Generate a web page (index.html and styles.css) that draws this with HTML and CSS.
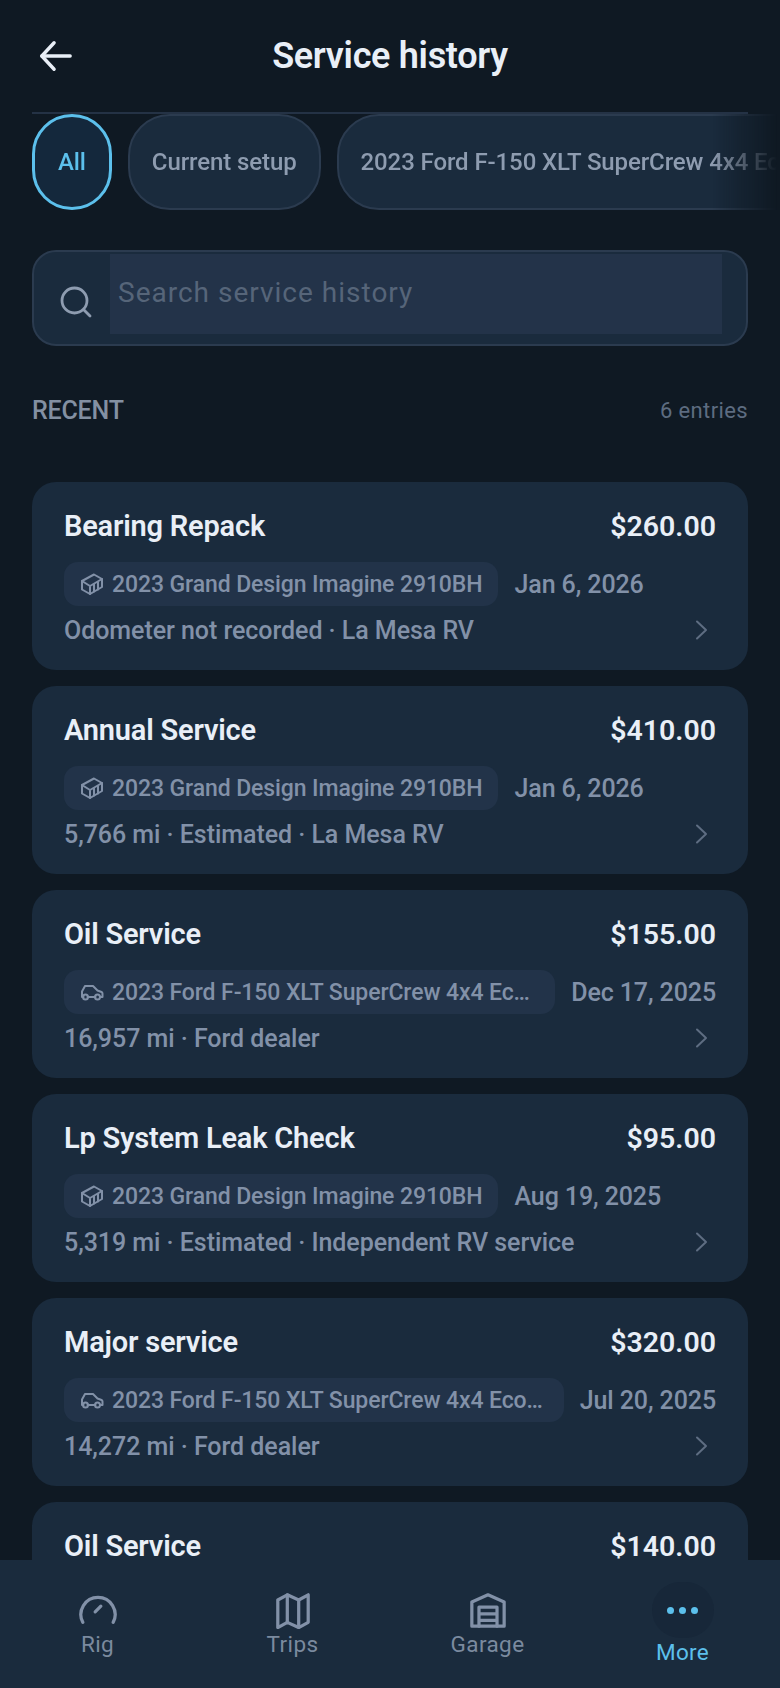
FILE: index.html
```html
<!DOCTYPE html>
<html lang="en">
<head>
<meta charset="utf-8">
<title>Service history</title>
<link rel="stylesheet" href="styles.css">
</head>
<body>
<div class="app">
  <header class="topbar">
    <svg class="back" viewBox="0 0 36 36" fill="none" stroke="currentColor" stroke-width="3.6" stroke-linecap="round" stroke-linejoin="round"><path d="M33 18H3"/><path d="M16 4 3 18l13 14"/></svg>
    <h1 class="title">Service history</h1>
  </header>
  <div class="chips">
    <div class="chip chip-on">All</div>
    <div class="chip">Current setup</div>
    <div class="chip">2023 Ford F-150 XLT SuperCrew 4x4 EcoBoost</div>
  </div>
  <div class="search">
    <svg class="search-icon" viewBox="0 0 32 32" fill="none" stroke="currentColor" stroke-width="2.8" stroke-linecap="round"><circle cx="14.5" cy="14.5" r="12.5"/><path d="m24 24 6 6"/></svg>
    <div class="search-field">Search service history</div>
  </div>
  <div class="section">
    <span class="section-label">RECENT</span>
    <span class="section-count">6 entries</span>
  </div>
  <main class="list">
    <article class="card">
      <div class="row"><span class="name">Bearing Repack</span><span class="cost">$260.00</span></div>
      <div class="row-meta"><span class="pill"><svg class="pill-icon"><use href="#trailer"/></svg><span class="pill-text">2023 Grand Design Imagine 2910BH</span></span><span class="date">Jan 6, 2026</span></div>
      <div class="row"><span class="detail">Odometer not recorded · La Mesa RV</span><svg class="chev"><use href="#chev"/></svg></div>
    </article>
    <article class="card">
      <div class="row"><span class="name">Annual Service</span><span class="cost">$410.00</span></div>
      <div class="row-meta"><span class="pill"><svg class="pill-icon"><use href="#trailer"/></svg><span class="pill-text">2023 Grand Design Imagine 2910BH</span></span><span class="date">Jan 6, 2026</span></div>
      <div class="row"><span class="detail">5,766 mi · Estimated · La Mesa RV</span><svg class="chev"><use href="#chev"/></svg></div>
    </article>
    <article class="card">
      <div class="row"><span class="name">Oil Service</span><span class="cost">$155.00</span></div>
      <div class="row-meta"><span class="pill pill-grow"><svg class="pill-icon"><use href="#car"/></svg><span class="pill-text">2023 Ford F-150 XLT SuperCrew 4x4 EcoBoost</span></span><span class="date">Dec 17, 2025</span></div>
      <div class="row"><span class="detail">16,957 mi · Ford dealer</span><svg class="chev"><use href="#chev"/></svg></div>
    </article>
    <article class="card">
      <div class="row"><span class="name">Lp System Leak Check</span><span class="cost">$95.00</span></div>
      <div class="row-meta"><span class="pill"><svg class="pill-icon"><use href="#trailer"/></svg><span class="pill-text">2023 Grand Design Imagine 2910BH</span></span><span class="date">Aug 19, 2025</span></div>
      <div class="row"><span class="detail">5,319 mi · Estimated · Independent RV service</span><svg class="chev"><use href="#chev"/></svg></div>
    </article>
    <article class="card">
      <div class="row"><span class="name">Major service</span><span class="cost">$320.00</span></div>
      <div class="row-meta"><span class="pill pill-grow"><svg class="pill-icon"><use href="#car"/></svg><span class="pill-text">2023 Ford F-150 XLT SuperCrew 4x4 EcoBoost</span></span><span class="date">Jul 20, 2025</span></div>
      <div class="row"><span class="detail">14,272 mi · Ford dealer</span><svg class="chev"><use href="#chev"/></svg></div>
    </article>
    <article class="card">
      <div class="row"><span class="name">Oil Service</span><span class="cost">$140.00</span></div>
    </article>
  </main>
  <nav class="tabs">
    <div class="tab">
      <svg class="tab-icon" viewBox="0 0 40 40" fill="none" stroke="currentColor" stroke-width="3.4" stroke-linecap="round" stroke-linejoin="round"><path d="M4 33a18 18 0 1 1 32 0"/><path d="m17 22 6-6"/></svg>
      <span class="tab-label">Rig</span>
    </div>
    <div class="tab">
      <svg class="tab-icon" viewBox="0 0 40 40" fill="none" stroke="currentColor" stroke-width="3.4" stroke-linecap="round" stroke-linejoin="round"><path d="M4 9.500 14 4l12 5.500L36 4v29l-10 5.500-12-5.500L4 38.500z"/><path d="M14 4v29.500M26 9.500V38"/></svg>
      <span class="tab-label">Trips</span>
    </div>
    <div class="tab">
      <svg class="tab-icon" viewBox="0 0 40 40" fill="none" stroke="currentColor" stroke-width="3.4" stroke-linecap="round" stroke-linejoin="round"><path d="M3 11.500 20 4l17 7.500V37H3z"/><path d="M10.500 37V17h19v20M10.500 24h19M10.500 31h19"/></svg>
      <span class="tab-label">Garage</span>
    </div>
    <div class="tab tab-on">
      <span class="more-bubble"><i class="dot"></i><i class="dot"></i><i class="dot"></i></span>
      <span class="tab-label">More</span>
    </div>
  </nav>
</div>
<svg class="defs" aria-hidden="true">
  <symbol id="trailer" viewBox="0 0 24 24" fill="none" stroke="currentColor" stroke-width="2" stroke-linecap="round" stroke-linejoin="round"><path d="M2 9 14 2.500l8 4.500v8L10 22l-8-4.500z"/><path d="M2 9l8 5 12-7M10 14v8M14 12v7.500M18 10v7.500"/></symbol>
  <symbol id="car" viewBox="0 0 24 24" fill="none" stroke="currentColor" stroke-width="2" stroke-linecap="round" stroke-linejoin="round"><path d="M3.500 17H2V11.500L5 6h8l4.500 4.500 4 1.500q1 .5 1 1.500V17h-2M7.500 17h8"/><circle cx="5.500" cy="17" r="2.500"/><circle cx="17.500" cy="17" r="2.500"/></symbol>
  <symbol id="chev" viewBox="0 0 24 24" fill="none" stroke="currentColor" stroke-width="2" stroke-linecap="round" stroke-linejoin="round"><path d="m8 3.500 9 8.500-9 8.500"/></symbol>
</svg>
</body>
</html>
```

FILE: styles.css
```css
* { box-sizing: border-box; }
html, body { margin: 0; padding: 0; }
body { background: #0f1923; font-family: Roboto, "Liberation Sans", sans-serif; color: #e9eff7; }
.app { position: relative; width: 780px; height: 1688px; overflow: hidden; padding: 0 32px; }
.defs { position: absolute; width: 0; height: 0; }

.topbar { height: 114px; position: relative; display: flex; align-items: center; justify-content: center; border-bottom: 2px solid #243245; }
.back { position: absolute; left: 7px; top: 39px; width: 34px; height: 34px; color: #e9eff7; }
.title { margin: 0; font-size: 36px; font-weight: 600; letter-spacing: -0.3px; line-height: 40px; }

.chips { display: flex; gap: 16px; margin-right: -32px; height: 96px; overflow: hidden; -webkit-mask-image: linear-gradient(90deg, #000 680px, transparent 745px); mask-image: linear-gradient(90deg, #000 680px, transparent 745px); }
.chip { flex: none; height: 96px; padding: 0 22px; display: flex; align-items: center; border-radius: 42px; background: #1a2b3d; border: 2px solid #2b3b4f; color: #8e9cb0; font-size: 24px; font-weight: 500; letter-spacing: -0.1px; white-space: nowrap; }
.chip-on { padding: 0 23px; background: #14283c; border: 3px solid #5cc0ec; color: #5cc0ec; }

.search { height: 96px; margin-top: 40px; display: flex; border-radius: 24px; background: #1a2b3d; border: 2px solid #2b3b4f; padding: 2px 24px 2px 0; }
.search-icon { flex: none; width: 32px; height: 32px; margin: 32px 18px 0 26px; color: #8e9cb0; }
.search-field { flex: 1; height: 80px; background: #233349; color: #566579; font-size: 28px; letter-spacing: 1px; line-height: 78px; padding-left: 8px; }

.section { display: flex; justify-content: space-between; align-items: center; height: 30px; margin-top: 49px; }
.section-label { font-size: 25px; font-weight: 500; color: #8390a2; letter-spacing: -0.2px; }
.section-count { font-size: 22px; color: #5d6c80; letter-spacing: 0.37px; }

.list { display: flex; flex-direction: column; gap: 16px; margin-top: 57px; }
.card { flex: none; height: 188px; border-radius: 24px; background: #1a2b3d; padding: 26px 32px 0; display: flex; flex-direction: column; }
.row { display: flex; justify-content: space-between; align-items: center; height: 36px; }
.name { font-size: 29px; font-weight: 600; letter-spacing: -0.2px; }
.cost { font-size: 28.5px; font-weight: 600; }
.row-meta { display: flex; align-items: center; gap: 16px; margin-top: 18px; margin-bottom: 6px; height: 44px; }
.pill { display: flex; align-items: center; gap: 8px; height: 44px; padding: 0 16px; border-radius: 14px; background: #223349; min-width: 0; }
.pill-grow { flex: 1; }
.pill-icon { flex: none; width: 24px; height: 24px; color: #8291a8; }
.pill-text { color: #8291a8; font-size: 23px; font-weight: 500; letter-spacing: -0.1px; white-space: nowrap; overflow: hidden; text-overflow: ellipsis; }
.date { flex: none; color: #8291a8; font-size: 25px; font-weight: 500; letter-spacing: -0.1px; }
.detail { color: #8291a8; font-size: 25px; font-weight: 500; letter-spacing: -0.05px; }
.chev { flex: none; width: 24px; height: 24px; margin-right: 3px; color: #5e6d82; }

.tabs { position: absolute; left: 0; right: 0; bottom: 0; height: 128px; background: #1a2b3d; display: grid; grid-template-columns: repeat(4, 1fr); }
.tab { display: flex; flex-direction: column; align-items: center; padding-top: 31px; color: #7b8a9f; }
.tab-icon { width: 38px; height: 38px; color: #8291a8; }
.tab-label { font-size: 22.5px; letter-spacing: 0.4px; line-height: 30px; }
.tab-on { color: #5cc0ec; padding-top: 22px; }
.more-bubble { width: 62px; height: 56px; border-radius: 28px; background: #172739; display: flex; align-items: center; justify-content: center; gap: 5px; }
.dot { width: 7px; height: 7px; border-radius: 50%; background: #5cc0ec; }
.tab-on .tab-label { margin-top: -1px; letter-spacing: 0.3px; }
```
